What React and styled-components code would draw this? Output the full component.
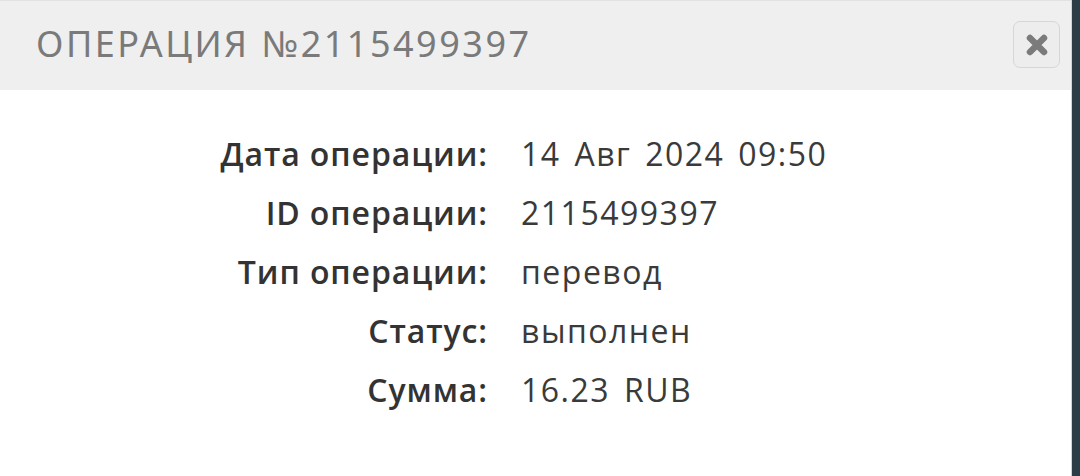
import * as React from "react";
import styled, { createGlobalStyle } from "styled-components";

const GlobalStyle = createGlobalStyle`
  html, body {
    margin: 0;
    padding: 0;
    background: #2d3d45;
  }
`;

const Page = styled.div`
  display: flex;
  width: 1080px;
  height: 476px;
  overflow: hidden;
`;

const Modal = styled.div`
  width: 1072px;
  height: 476px;
  background: #ffffff;
  border-right: 1px solid #cfd4d6;
  box-sizing: border-box;
  display: flex;
  flex-flow: column;
`;

const Header = styled.header`
  height: 90px;
  background: #efefef;
  border-top: 1px solid #e2e2e2;
  box-sizing: border-box;
  display: flex;
  align-items: center;
  justify-content: space-between;
  padding: 0 11px 0 36px;
`;

const Title = styled.h2`
  margin: 0;
  font-family: "Noto Sans", "DejaVu Sans", sans-serif;
  font-weight: 400;
  font-size: 36px;
  letter-spacing: 2.5px;
  color: #7a7a7a;
  text-transform: uppercase;
  padding-bottom: 4px;
`;

const CloseButton = styled.button`
  width: 47px;
  height: 47px;
  margin-bottom: 2px;
  border: 1px solid #d6d6d6;
  border-radius: 7px;
  background: #ededed;
  display: flex;
  align-items: center;
  justify-content: center;
  padding: 0;
  cursor: pointer;
`;

const Details = styled.dl`
  margin: 0;
  padding-top: 34px;
  display: grid;
  grid-template-columns: 488px auto;
  column-gap: 33px;
  grid-auto-rows: 59px;
  align-items: center;
  font-family: "Open Sans", "Liberation Sans", sans-serif;
  font-size: 32px;
  color: #333333;
`;

const Label = styled.dt`
  justify-self: end;
  font-weight: 600;
  letter-spacing: 0.9px;
`;

const Value = styled.dd`
  margin: 0;
  font-weight: 400;
  letter-spacing: 1.5px;
  word-spacing: 4px;
  color: #3a3a3a;
`;

const rows = [
  ["Дата операции:", "14 Авг 2024 09:50"],
  ["ID операции:", "2115499397"],
  ["Тип операции:", "перевод"],
  ["Статус:", "выполнен"],
  ["Сумма:", "16.23 RUB"],
];

const CloseIcon = () => (
  <svg width="24" height="24" viewBox="0 0 24 24">
    <path
      d="M5 5 L19 19 M19 5 L5 19"
      stroke="#7b7b7b"
      strokeWidth="6.5"
      strokeLinecap="round"
    />
  </svg>
);

export default function App() {
  return (
    <Page>
      <GlobalStyle />
      <Modal>
        <Header>
          <Title>Операция №2115499397</Title>
          <CloseButton aria-label="Закрыть">
            <CloseIcon />
          </CloseButton>
        </Header>
        <Details>
          {rows.map(([label, value]) => (
            <React.Fragment key={label}>
              <Label>{label}</Label>
              <Value>{value}</Value>
            </React.Fragment>
          ))}
        </Details>
      </Modal>
    </Page>
  );
}
